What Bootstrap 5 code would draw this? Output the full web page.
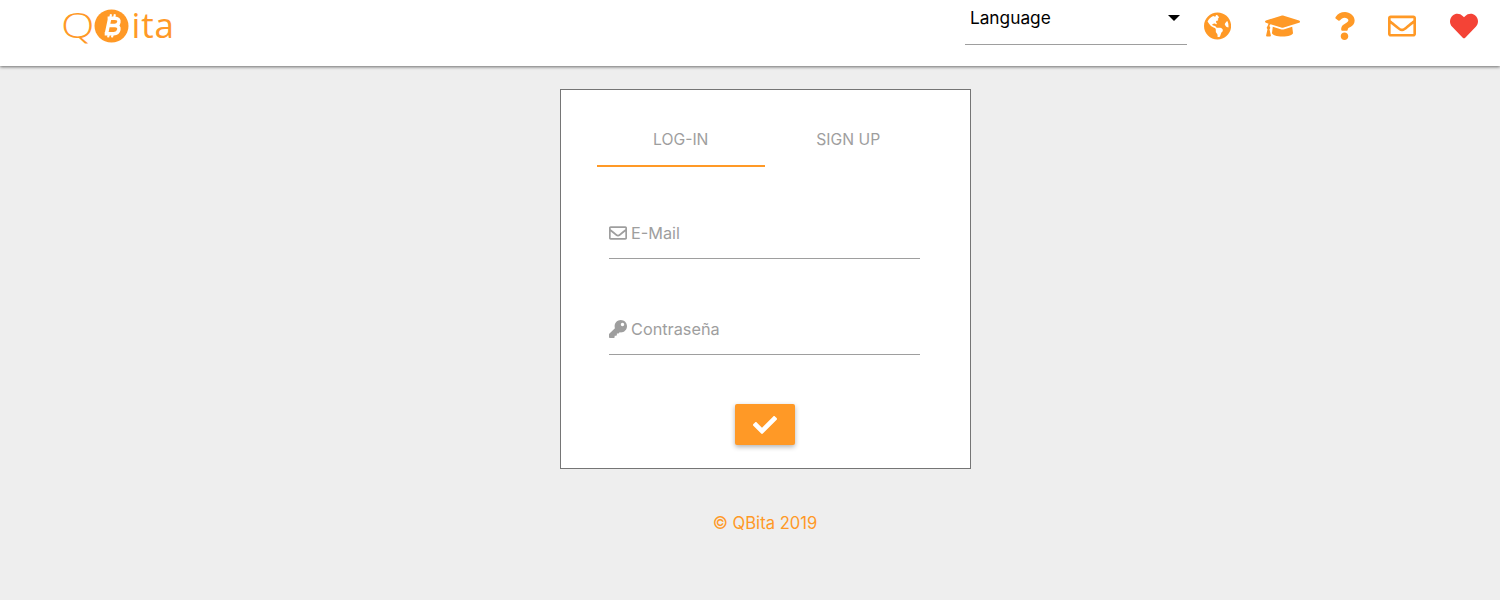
<!DOCTYPE html>
<html lang="es">
<head>
<meta charset="utf-8">
<title>QBita</title>
<link href="https://cdn.jsdelivr.net/npm/bootstrap@5.3.0/dist/css/bootstrap.min.css" rel="stylesheet">
<style>
:root{--qb-orange:#ff9926;--qb-grey:#9e9e9e;}
html,body{height:100%;}
body{background:#eee;font-family:Inter,"Liberation Sans",sans-serif;overflow:hidden;}
.qb-top{height:66px;background:#fff;box-shadow:0 1px 3px rgba(0,0,0,.55);padding:0 22px 0 63px;}
.qb-logo{color:var(--qb-orange);font-family:"Open Sans","Liberation Sans",sans-serif;font-size:35px;line-height:1;margin-top:7px;letter-spacing:.8px;text-decoration:none;white-space:nowrap;}
.qb-q{display:inline-block;font-weight:300;transform:scaleX(1.25);transform-origin:left;margin:0 5px 0 -2px;}
.qb-logo svg{width:35px;height:34px;margin:0 3px 0 0;vertical-align:-5px;}
.qb-lang{width:222px;height:45px;margin-right:17px;border:0;border-bottom:1px solid #9e9e9e;border-radius:0;background:none;font-size:17.3px;color:#000;padding:0 7px 8px 5px;}
.qb-lang::after{border-top-width:6px;border-right-width:6px;border-left-width:6px;margin:0;}
.qb-icons{gap:33.75px;margin-top:12px;}
.qb-icons svg{height:28px;fill:var(--qb-orange);display:block;}
.qb-icons .qb-heart{fill:#f44336;}
.qb-main{padding-left:30px;}
.qb-box{width:411px;height:380px;margin-top:23px;background:#fff;border:1px solid #757575;padding:35px 37.5px 0 36.5px;}
.qb-tab{flex:1 1 0;height:42px;padding:0 0 14px;color:var(--qb-grey);font-size:15.7px;line-height:29px;text-align:center;text-transform:uppercase;text-decoration:none;}
.qb-tab.active{border-bottom:2px solid var(--qb-orange);}
.qb-field{position:relative;margin:0 12px;height:48px;border-bottom:1px solid #9e9e9e;}
.qb-field input{width:100%;height:100%;border:0;outline:0;background:none;}
.qb-field label{position:absolute;left:0;top:10px;color:var(--qb-grey);font-size:16.3px;line-height:24px;display:flex;align-items:center;gap:4px;}
.qb-field svg{width:18px;height:18px;fill:#9e9e9e;}
.qb-mail{margin-top:44px;}
.qb-pass{margin-top:48px;}
.qb-ok{width:60px;height:41px;margin:49px 0 0 1px;border:0;border-radius:2px;background:var(--qb-orange);box-shadow:0 2px 5px rgba(0,0,0,.3);padding:0;}
.qb-ok svg{width:24px;height:24px;fill:#fff;}
.qb-foot{margin-top:42px;color:var(--qb-orange);font-size:16.6px;line-height:24px;text-align:center;}
</style>
</head>
<body>
<header class="qb-top d-flex align-items-start justify-content-between">
  <a class="qb-logo" href="#"><span class="qb-q">Q</span><svg viewBox="0 0 36 35" role="img" aria-label="Bitcoin"><ellipse cx="18" cy="17.500" rx="17.500" ry="17" fill="#ff9926"/><g fill="none" stroke="#fff" stroke-width="3.600" stroke-linejoin="round"><path d="M14 9.500h7.500c3 0 4.600 1.500 4.100 4-.4 2.200-2.100 3.600-4.500 3.600h-5M13.600 17.100h8c3 0 4.500 1.600 4 4.200-.5 2.600-2.400 4.100-5.200 4.100h-9.400M16.200 9.500l-3.400 15.900"/><path stroke-width="2.200" d="M17.500 5.500l-.8 3.700M21.500 5.500l-.8 3.700M15.300 25.500l-.8 3.700M19.300 25.500l-.8 3.700"/></g></svg>ita</a>
  <div class="d-flex align-items-start">
    <button type="button" class="btn dropdown-toggle qb-lang d-flex align-items-center justify-content-between">Language</button>
    <div class="qb-icons d-flex align-items-center">
      <svg viewBox="0 0 496 512"><path d="M248 8C111.030 8 0 119.030 0 256s111.030 248 248 248 248-111.030 248-248S384.970 8 248 8zm82.290 357.600c-3.900 3.880-7.990 7.950-11.310 11.280-2.990 3-5.100 6.700-6.170 10.710-1.510 5.660-2.730 11.380-4.770 16.870l-17.390 46.850c-13.760 3-28 4.690-42.650 4.690v-27.380c1.690-12.620-7.640-36.260-22.630-51.250-6-6-9.370-14.140-9.370-22.630v-32.010c0-11.640-6.270-22.340-16.460-27.970-14.370-7.950-34.810-19.060-48.810-26.110-11.480-5.780-22.100-13.140-31.650-21.750l-.8-.72a114.792 114.792 0 0 1-18.060-20.740c-9.380-13.770-24.660-36.420-34.590-51.140 20.470-45.500 57.360-82.040 103.200-101.890l24.010 12.010C203.480 89.740 216 82.010 216 70.110v-11.300c7.990-1.290 16.120-2.110 24.420-2.420l28.300 28.300c6.250 6.250 6.250 16.380 0 22.630L264 112l-10.340 10.340c-3.120 3.120-3.120 8.190 0 11.310l4.690 4.690c3.120 3.120 3.120 8.190 0 11.310l-8 8a8.008 8.008 0 0 1-5.660 2.340h-8.990c-2.080 0-4.080.81-5.580 2.270l-9.920 9.650a8.008 8.008 0 0 0-1.580 9.310l15.590 31.190c2.660 5.320-1.210 11.580-7.150 11.580h-5.640c-1.930 0-3.790-.7-5.240-1.960l-9.280-8.060a16.017 16.017 0 0 0-15.550-3.100l-31.170 10.390a11.950 11.950 0 0 0-8.170 11.340c0 4.530 2.560 8.660 6.610 10.690l11.080 5.540c9.410 4.710 19.790 7.160 30.310 7.160s22.590 27.290 32 32h66.750c8.490 0 16.620 3.370 22.630 9.370l13.690 13.690a30.503 30.503 0 0 1 8.930 21.570 46.536 46.536 0 0 1-13.720 32.980zM417 274.250c-5.790-1.450-10.840-5-14.150-9.970l-17.980-26.970a23.970 23.970 0 0 1 0-26.620l19.590-29.380c2.320-3.470 5.500-6.280 9.240-8.150l12.980-6.490C440.200 193.590 448 223.870 448 256c0 8.670-.74 17.160-1.820 25.540L417 274.250z"/></svg>
      <svg viewBox="0 0 640 512"><path d="M622.340 153.200L343.400 67.500c-15.200-4.670-31.600-4.670-46.790 0L17.660 153.200c-23.540 7.230-23.540 38.360 0 45.590l48.630 14.940c-10.670 13.190-17.230 29.280-17.880 46.900C38.780 266.150 32 276.110 32 288c0 10.780 5.680 19.850 13.860 25.650L20.330 428.530C18.110 438.520 25.710 448 35.940 448h56.110c10.240 0 17.840-9.480 15.620-19.470L82.140 313.650C90.320 307.850 96 298.780 96 288c0-11.570-6.470-21.250-15.660-26.870.76-15.020 8.440-28.300 20.690-36.720L296.600 284.500c9.060 2.780 26.440 6.250 46.790 0l278.950-85.700c23.550-7.240 23.550-38.360 0-45.600zM352.790 315.090c-28.530 8.760-52.840 3.920-65.590 0l-145.020-44.550L128 384c0 35.350 85.960 64 192 64s192-28.650 192-64l-14.180-113.470-145.030 44.560z"/></svg>
      <svg viewBox="0 0 384 512"><path d="M202.021 0C122.202 0 70.503 32.703 29.914 91.026c-7.363 10.580-5.093 25.086 5.178 32.874l43.138 32.709c10.373 7.865 25.132 6.026 33.253-4.148 25.049-31.381 43.630-49.449 82.757-49.449 30.764 0 68.816 19.799 68.816 49.631 0 22.552-18.617 34.134-48.993 51.164-35.423 19.860-82.299 44.576-82.299 106.405V320c0 13.255 10.745 24 24 24h72.471c13.255 0 24-10.745 24-24v-5.773c0-42.860 125.268-44.645 125.268-160.627C377.504 66.256 286.902 0 202.021 0zM192 373.459c-38.196 0-69.271 31.075-69.271 69.271 0 38.195 31.075 69.270 69.271 69.270s69.271-31.075 69.271-69.271-31.075-69.270-69.271-69.270z"/></svg>
      <svg viewBox="0 0 512 512"><path d="M464 64H48C21.490 64 0 85.490 0 112v288c0 26.510 21.490 48 48 48h416c26.510 0 48-21.490 48-48V112c0-26.510-21.490-48-48-48zm0 48v40.805c-22.422 18.259-58.168 46.651-134.587 106.490-16.841 13.247-50.201 45.072-73.413 44.701-23.208.375-56.579-31.459-73.413-44.701C106.180 199.465 70.425 171.067 48 152.805V112h416zM48 400V214.398c22.914 18.251 55.409 43.862 104.938 82.646 21.857 17.205 60.134 55.186 103.062 54.955 42.717.231 80.509-37.199 103.053-54.947 49.528-38.783 82.032-64.401 104.947-82.653V400H48z"/></svg>
      <svg class="qb-heart" viewBox="0 0 512 512"><path d="M462.300 62.600C407.500 15.900 326 24.300 275.700 76.200L256 96.500l-19.700-20.300C186.100 24.300 104.500 15.900 49.700 62.600c-62.800 53.600-66.100 149.800-9.900 207.900l193.500 199.800c12.500 12.900 32.800 12.900 45.300 0l193.500-199.800c56.300-58.100 53-154.300-9.800-207.900z"/></svg>
    </div>
  </div>
</header>
<main class="qb-main d-flex flex-column align-items-center">
  <section class="qb-box">
    <nav class="d-flex">
      <a class="qb-tab active" href="#">Log-in</a>
      <a class="qb-tab" href="#">Sign up</a>
    </nav>
    <form class="d-flex flex-column">
      <div class="qb-field qb-mail">
        <input id="qb-email" type="email" autocomplete="off">
        <label for="qb-email"><svg viewBox="0 0 512 512"><path d="M464 64H48C21.490 64 0 85.490 0 112v288c0 26.510 21.490 48 48 48h416c26.510 0 48-21.490 48-48V112c0-26.510-21.490-48-48-48zm0 48v40.805c-22.422 18.259-58.168 46.651-134.587 106.490-16.841 13.247-50.201 45.072-73.413 44.701-23.208.375-56.579-31.459-73.413-44.701C106.180 199.465 70.425 171.067 48 152.805V112h416zM48 400V214.398c22.914 18.251 55.409 43.862 104.938 82.646 21.857 17.205 60.134 55.186 103.062 54.955 42.717.231 80.509-37.199 103.053-54.947 49.528-38.783 82.032-64.401 104.947-82.653V400H48z"/></svg>E-Mail</label>
      </div>
      <div class="qb-field qb-pass">
        <input id="qb-pass" type="password" autocomplete="off">
        <label for="qb-pass"><svg viewBox="0 0 512 512"><path d="M512 176.001C512 273.203 433.202 352 336 352c-11.220 0-22.190-1.062-32.827-3.069l-24.012 27.014A23.999 23.999 0 0 1 261.223 384H224v40c0 13.255-10.745 24-24 24h-40v40c0 13.255-10.745 24-24 24H24c-13.255 0-24-10.745-24-24v-78.059c0-6.365 2.529-12.470 7.029-16.971l161.802-161.802C163.108 213.814 160 195.271 160 176 160 78.798 238.797.001 335.999 0 433.488-.001 512 78.511 512 176.001zM336 128c0 26.510 21.490 48 48 48s48-21.490 48-48-21.490-48-48-48-48 21.490-48 48z"/></svg>Contraseña</label>
      </div>
      <button type="button" class="btn qb-ok align-self-center d-flex align-items-center justify-content-center" aria-label="OK"><svg viewBox="0 0 512 512"><path d="M173.898 439.404l-166.400-166.400c-9.997-9.997-9.997-26.206 0-36.204l36.203-36.204c9.997-9.998 26.207-9.998 36.204 0L192 312.690 432.095 72.596c9.997-9.997 26.207-9.997 36.204 0l36.203 36.204c9.997 9.997 9.997 26.206 0 36.204l-294.400 294.401c-9.998 9.997-26.207 9.997-36.204-.001z"/></svg></button>
    </form>
  </section>
  <footer class="qb-foot">© QBita 2019</footer>
</main>
</body>
</html>
